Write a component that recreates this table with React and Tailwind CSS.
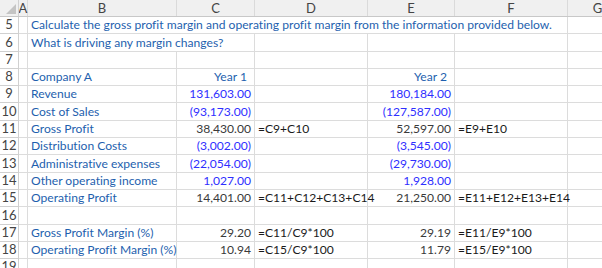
import React from "react";

// column widths in px: row header, A, B, C, D, E, F, G
const W = { rh: 19, A: 9, B: 149, C: 78, D: 113, E: 87, F: 113, G: 60 };

const LABEL = "text-[#1e5fae]";
const INPUT = "text-[#2f2fff]";
const CALC = "text-[#3a3a3a]";
const FORMULA = "text-[#1a1a1a]";

const rows = [
  { n: 5, title: "Calculate the gross profit margin and operating profit margin from the information provided below.", span: "BF" },
  { n: 6, title: "What is driving any margin changes?", span: "BC" },
  { n: 7 },
  { n: 8, b: "Company A", c: "Year 1", e: "Year 2", year: true },
  { n: 9, b: "Revenue", c: "131,603.00", e: "180,184.00", input: true },
  { n: 10, b: "Cost of Sales", c: "(93,173.00)", e: "(127,587.00)", input: true },
  { n: 11, b: "Gross Profit", c: "38,430.00", d: "=C9+C10", e: "52,597.00", f: "=E9+E10" },
  { n: 12, b: "Distribution Costs", c: "(3,002.00)", e: "(3,545.00)", input: true },
  { n: 13, b: "Administrative expenses", c: "(22,054.00)", e: "(29,730.00)", input: true },
  { n: 14, b: "Other operating income", c: "1,027.00", e: "1,928.00", input: true },
  { n: 15, b: "Operating Profit", c: "14,401.00", d: "=C11+C12+C13+C14", e: "21,250.00", f: "=E11+E12+E13+E14" },
  { n: 16 },
  { n: 17, b: "Gross Profit Margin (%)", c: "29.20", d: "=C11/C9*100", e: "29.19", f: "=E11/E9*100" },
  { n: 18, b: "Operating Profit Margin (%)", c: "10.94", d: "=C15/C9*100", e: "11.79", f: "=E15/E9*100" },
  { n: 19 },
];

const Cell = ({ w, className = "", children }) => (
  <div
    className={`shrink-0 h-full border-r border-b border-[#dcdcdc] flex items-end pb-[2px] whitespace-nowrap overflow-visible ${className}`}
    style={{ width: w }}
  >
    {children}
  </div>
);

const Row = ({ r }) => {
  const numColor = r.year ? LABEL : r.input ? INPUT : CALC;
  const numPad = r.year ? "pr-[7px]" : "pr-[3px]";
  return (
    <div className="flex h-[17.3px]">
      <div
        className="shrink-0 h-full border-r border-b border-[#d0d0d0] flex items-end pb-[2px] justify-center text-[#444] text-[13px]"
        style={{ width: W.rh }}
      >
        {r.n}
      </div>
      <Cell w={W.A} />
      {r.span === "BF" ? (
        <Cell w={W.B + W.C + W.D + W.E + W.F} className={`pl-[3px] ${LABEL}`}>
          {r.title}
        </Cell>
      ) : r.span === "BC" ? (
        <>
          <Cell w={W.B + W.C} className={`pl-[3px] ${LABEL}`}>
            {r.title}
          </Cell>
          <Cell w={W.D} />
          <Cell w={W.E} />
          <Cell w={W.F} />
        </>
      ) : (
        <>
          <Cell w={W.B} className={`pl-[3px] ${LABEL}`}>
            {r.b}
          </Cell>
          <Cell w={W.C} className={`justify-end ${numPad} ${numColor}`}>
            {r.c}
          </Cell>
          <Cell w={W.D} className={`pl-[3px] ${FORMULA}`}>
            {r.d}
          </Cell>
          <Cell w={W.E} className={`justify-end ${numPad} ${numColor}`}>
            {r.e}
          </Cell>
          <Cell w={W.F} className={`pl-[3px] ${FORMULA}`}>
            {r.f}
          </Cell>
        </>
      )}
      <Cell w={W.G} />
    </div>
  );
};

const HeaderRow = () => {
  const cols = ["A", "B", "C", "D", "E", "F", "G"];
  return (
    <div className="flex h-[17px] bg-[#f0f0f0] border-b border-[#c8c8c8]">
      <div
        className="shrink-0 h-full border-r border-[#d0d0d0] relative"
        style={{ width: W.rh }}
      >
        <svg className="absolute right-[2px] bottom-[2px]" width="10" height="10" viewBox="0 0 10 10">
          <polygon points="10,0 10,10 0,10" fill="#c4c4c4" />
        </svg>
      </div>
      {cols.map((c) => (
        <div
          key={c}
          className="shrink-0 h-full border-r border-[#dadada] flex items-center justify-center text-[#444] text-[13px]"
          style={{ width: W[c] }}
        >
          {c}
        </div>
      ))}
    </div>
  );
};

export default function App() {
  return (
    <div
      className="w-[602px] h-[268px] overflow-hidden bg-white text-[12.1px] leading-none"
      style={{ fontFamily: "Lato, 'Liberation Sans', sans-serif", fontVariantLigatures: "none" }}
    >
      <div className="w-[750px]">
        <HeaderRow />
        {rows.map((r) => (
          <Row key={r.n} r={r} />
        ))}
      </div>
    </div>
  );
}
